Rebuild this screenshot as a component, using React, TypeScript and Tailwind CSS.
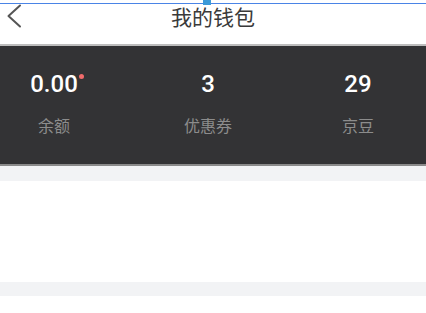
const stats = [
  { value: '0.00', label: '余额', dot: true, cls: 'ml-[4px]' },
  { value: '3', label: '优惠券', dot: false, cls: 'ml-[54px]' },
  { value: '29', label: '京豆', dot: false, cls: 'ml-[50px]' },
]

const cjk = "font-['Noto_Sans_CJK_SC',sans-serif]"

export default function App() {
  return (
    <div className="relative w-[426px] min-h-[313px] bg-white overflow-hidden">
      {/* selection marker on top */}
      <div className="absolute left-0 right-0 top-[3px] h-px bg-[#4a84e6]" />
      <div className="absolute left-[203px] top-0 w-[8px] h-[5px] bg-[#3c9ad8]" />

      <header className="h-[46px] grid grid-cols-[1fr_auto_1fr] border-b-2 border-[#bdbdbd]">
        <div className="pl-[6px] pt-[4px]">
          <svg width="16" height="24" viewBox="0 0 16 24" fill="none">
            <polyline points="14,1.5 2.5,12 14,22.5" stroke="#555" strokeWidth="2" strokeLinecap="round" strokeLinejoin="round" />
          </svg>
        </div>
        <h1 className={`${cjk} pt-[2px] text-[21px] leading-[29px] text-[#3a3a3a]`}>我的钱包</h1>
        <div />
      </header>

      <section className="h-[120px] bg-[#333335] border-b-2 border-[#8a8a8a] flex pt-[24px]">
        {stats.map((s) => (
          <div key={s.label} className={`${s.cls} w-[100px] flex flex-col items-center`}>
            <div className="relative font-['Roboto',sans-serif] font-medium text-[24px] leading-[28px] text-white">
              {s.value}
              {s.dot && <span className="absolute -right-[6px] top-[4px] w-[5px] h-[5px] rounded-full bg-[#f06b6b]" />}
            </div>
            <div className={`${cjk} mt-[16px] text-[16px] leading-[22px] text-[#8c8c8c]`}>{s.label}</div>
          </div>
        ))}
      </section>

      <div className="h-[15px] bg-[#f2f3f5]" />
      <div className="h-[101px] bg-white" />
      <div className="h-[14px] bg-[#f2f3f5]" />
      <div className="h-[17px] bg-white" />
    </div>
  )
}
